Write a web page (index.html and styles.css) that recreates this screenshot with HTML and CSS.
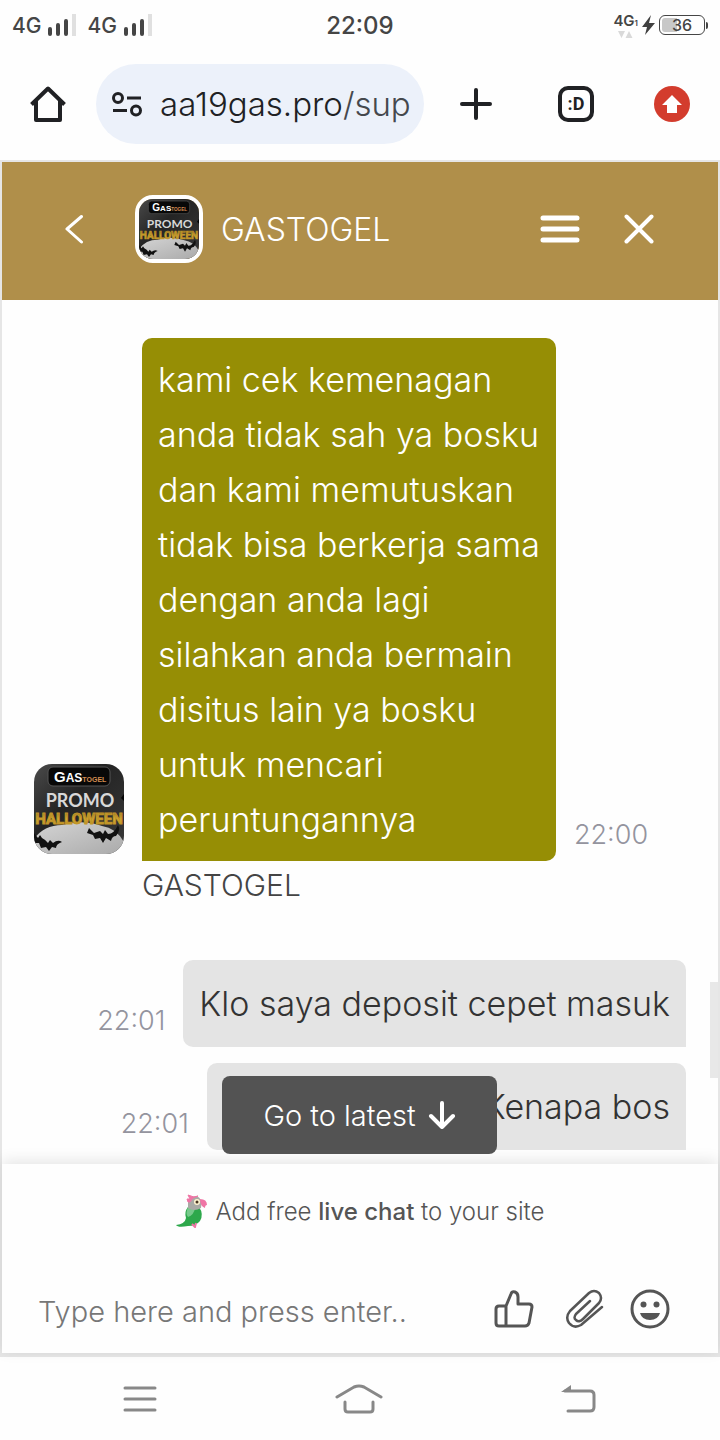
FILE: index.html
```html
<!DOCTYPE html>
<html lang="id">
<head>
<meta charset="utf-8">
<meta name="viewport" content="width=device-width, initial-scale=1">
<title>GASTOGEL live chat</title>
<link rel="stylesheet" href="styles.css">
</head>
<body>
<svg class="defs" aria-hidden="true">
  <defs>
    <linearGradient id="night" x1="0" y1="0" x2="1" y2="1"><stop offset="0" stop-color="#4a4a4a"/><stop offset=".4" stop-color="#242424"/><stop offset="1" stop-color="#393939"/></linearGradient>
    <linearGradient id="gold" x1="0" y1="0" x2="0" y2="1"><stop offset="0" stop-color="#76601a"/><stop offset=".5" stop-color="#d9ae35"/><stop offset="1" stop-color="#ad8523"/></linearGradient>
    <linearGradient id="moon" x1="0" y1="0" x2="1" y2="1"><stop offset="0" stop-color="#d4d4d4"/><stop offset="1" stop-color="#aaa"/></linearGradient>
  </defs>
  <symbol id="promo" viewBox="0 0 90 90">
    <rect width="90" height="90" fill="url(#night)"/>
    <path d="M0 75Q10 61 28 61Q48 55 68 62Q82 64 90 78V90H0Z" fill="url(#moon)"/>
    <rect x="14" y="3" width="62" height="19" rx="5" fill="#080808" stroke="#555"/>
    <text x="20" y="18" class="logo-gas">G<tspan class="logo-as">AS</tspan><tspan class="logo-togel">TOGEL</tspan></text>
    <text x="46" y="43" class="logo-promo">PROMO</text>
    <text x="45" y="60" class="logo-event">HALLOWEEN</text>
    <path d="M0 69L4 74L6 71L8 74Q12 76 14 79L16 76L19 79Q24 75 28 78Q22 80 22 84L18 83L15 87L12 83L7 84L5 79L0 79Z" fill="#111"/>
    <path d="M55 64L60 69L66 67L69 70L71 66L74 70Q80 70 84 61Q87 66 82 72Q78 72 77 77L72 74L69 79L66 74L61 75L59 71L53 69Z" fill="#111"/>
    <path d="M90 30L87 34L90 37Z" fill="#050505"/>
  </symbol>
</svg>

<header class="status">
  <div class="networks">
    <span>4G</span>
    <svg width="28" height="22" viewBox="0 0 28 22"><path d="M2 15v5M10 11v9M18 7v13" stroke="#454545" stroke-width="4" stroke-linecap="round"/><path d="M26 0v22" stroke="#e0e0e0" stroke-width="4"/></svg>
    <span class="second">4G</span>
    <svg width="28" height="22" viewBox="0 0 28 22"><path d="M2 15v5M10 11v9M18 7v13" stroke="#454545" stroke-width="4" stroke-linecap="round"/><path d="M26 0v22" stroke="#e0e0e0" stroke-width="4"/></svg>
  </div>
  <time class="clock">22:09</time>
  <div class="power">
    <div class="data"><span>4G<small>1</small></span><svg width="15" height="7" viewBox="0 0 15 7"><path d="M0 0h7L3.500 7ZM7.500 7h7L11 0Z" fill="#d9d9d9"/></svg></div>
    <svg width="13" height="20" viewBox="0 0 13 20"><path d="M9 0L0 12H5L3 20L13 8H7Z" fill="#404040"/></svg>
    <div class="battery">36</div>
  </div>
</header>

<nav class="browser">
  <button class="plain" aria-label="Home"><svg width="36" height="36" viewBox="0 0 36 36"><path d="M1.500 18.500L18 2.500L34.500 18.500M6 15V34H30V15" fill="none" stroke="#202124" stroke-width="4" stroke-linejoin="round"/></svg></button>
  <button class="address">
    <svg width="30" height="26" viewBox="0 0 30 26" fill="none" stroke="#202124"><circle cx="6" cy="7" r="4.500" stroke-width="3"/><circle cx="24" cy="19.500" r="4.500" stroke-width="3"/><path d="M15 7H29M1 19.500H15" stroke-width="3"/></svg>
    <span>aa19gas.pro<i>/sup</i></span>
  </button>
  <button class="plain plus" aria-label="New tab"><svg width="32" height="32" viewBox="0 0 32 32"><path d="M16 2V30M2 16H30" stroke="#202124" stroke-width="4" stroke-linecap="round"/></svg></button>
  <button class="tabs" aria-label="Open tabs">:D</button>
  <button class="plain" aria-label="Update browser"><svg width="36" height="36" viewBox="0 0 36 36"><circle cx="18" cy="18" r="18" fill="#d33c2d"/><path d="M18 9L28 19H23V27H13V19H8Z" fill="#fff"/></svg></button>
</nav>

<main class="chat">
  <header class="chat-head">
    <button class="plain back" aria-label="Back"><svg width="20" height="30" viewBox="0 0 20 30"><path d="M17.500 2.500L3 15L17.500 28" fill="none" stroke="#fff" stroke-width="3" stroke-linecap="round" stroke-linejoin="round"/></svg></button>
    <svg class="face small" role="img" aria-label="GASTOGEL"><use href="#promo"/></svg>
    <h1>GASTOGEL</h1>
    <button class="plain" aria-label="Menu"><svg width="40" height="28" viewBox="0 0 40 28"><path d="M3 3H37M3 14H37M3 25H37" stroke="#fff" stroke-width="5" stroke-linecap="round"/></svg></button>
    <button class="plain close" aria-label="Close"><svg width="30" height="30" viewBox="0 0 30 30"><path d="M2.500 2.500L27.500 27.500M27.500 2.500L2.500 27.500" stroke="#fff" stroke-width="4" stroke-linecap="round"/></svg></button>
  </header>

  <section class="messages">
    <article class="row agent">
      <svg class="face" role="img" aria-label="GASTOGEL"><use href="#promo"/></svg>
      <p class="bubble">kami cek kemenagan<br>anda tidak sah ya bosku<br>dan kami memutuskan<br>tidak bisa berkerja sama<br>dengan anda lagi<br>silahkan anda bermain<br>disitus lain ya bosku<br>untuk mencari<br>peruntungannya</p>
      <time>22:00</time>
      <span class="sender">GASTOGEL</span>
    </article>
    <article class="row visitor">
      <time>22:01</time>
      <p class="bubble">Klo saya deposit cepet masuk</p>
    </article>
    <article class="row visitor">
      <time>22:01</time>
      <p class="bubble long">Kenapa bos</p>
    </article>
    <button class="latest">Go to latest <svg width="28" height="28" viewBox="0 0 28 28"><path d="M14 2V25M3 15L14 26L25 15" fill="none" stroke="#fff" stroke-width="4" stroke-linecap="round" stroke-linejoin="round"/></svg></button>
    <span class="thumb"></span>
  </section>

  <footer class="compose">
    <a class="promo-link" href="#">
      <svg width="32" height="34" viewBox="0 0 32 34"><path d="M12 13Q8 18 10 24Q9 30 0 31Q2 34 12 32Q20 32 24 27Q28 20 23 13Z" fill="#2da84b"/><path d="M12 13Q9 20 12 23Q18 21 19 14Z" fill="#77c98b"/><path d="M12 8Q14 2 21 2Q27 5 25 14Q18 18 12 14Z" fill="#a9aaa5"/><path d="M12 8L11 5L14 5L12 1L18 3L22 2Q16 3 14 8Z" fill="#ef75a5" stroke="#ef75a5"/><path d="M24 5Q31 5 31 11Q29 11 29 14Q24 12 24 5Z" fill="#ef75a5"/><circle cx="21" cy="8" r="3" fill="#fff5d0"/><circle cx="21" cy="8" r="1.500" fill="#443322"/><path d="M16 30l3 3 1-4" stroke="#ef75a5" stroke-width="2" fill="none"/></svg>
      <span>Add free <b>live chat</b> to your site</span>
    </a>
    <form class="entry">
      <input type="text" aria-label="Message" placeholder="Type here and press enter..">
      <button type="button" class="plain" aria-label="Like"><svg width="40" height="40" viewBox="0 0 40 40" fill="none" stroke="#555" stroke-width="3" stroke-linejoin="round"><path d="M12 17L17 5Q18 2 21 3Q24 4 24 8V15H35Q38 15 38 18L35 34Q34 37 31 37H5Q2 37 2 34V20Q2 17 5 17H12V37"/></svg></button>
      <button type="button" class="plain clip" aria-label="Attach file"><svg width="40" height="40" viewBox="0 0 40 40" fill="none" stroke="#555" stroke-width="2.500" stroke-linecap="round" stroke-linejoin="round"><path d="M25 12L11 25Q8 29 11 31Q14 34 18 30L34 14Q38 9 34 4Q29 0 24 4L5 22Q0 28 4 34Q9 40 16 36L37 18"/></svg></button>
      <button type="button" class="plain" aria-label="Emoji"><svg width="40" height="40" viewBox="0 0 40 40"><circle cx="20" cy="20" r="18" fill="none" stroke="#555" stroke-width="3"/><circle cx="13.500" cy="15.500" r="3" fill="#555"/><circle cx="26.500" cy="15.500" r="3" fill="#555"/><path d="M10 24H30Q28 31 20 31Q12 31 10 24Z" fill="#555"/></svg></button>
    </form>
  </footer>
</main>

<nav class="system">
  <button class="plain" aria-label="Recent apps"><svg width="34" height="26" viewBox="0 0 34 26"><path d="M2 2H32M2 13H32M2 24H32" stroke="#888" stroke-width="3" stroke-linecap="round"/></svg></button>
  <button class="plain" aria-label="Home screen"><svg width="48" height="30" viewBox="0 0 48 30" fill="none" stroke="#888" stroke-width="3" stroke-linecap="round"><path d="M2 13L19 3Q24 1 29 3L46 13M10 18V25Q10 28 13 28H35Q38 28 38 25V18"/></svg></button>
  <button class="plain" aria-label="Go back"><svg width="36" height="28" viewBox="0 0 36 28"><path d="M7 26H29Q33 26 33 22V10Q33 6 29 6H4" fill="none" stroke="#888" stroke-width="3" stroke-linecap="round"/><path d="M0 7L10 0V7Z" fill="#888"/></svg></button>
</nav>
</body>
</html>
```
FILE: styles.css
```css
* { box-sizing: border-box; }
body {
  margin: 0;
  min-height: 100vh;
  display: flex;
  flex-direction: column;
  background: #fefefe;
  color: #333;
  font-family: Inter, "Liberation Sans", sans-serif;
  font-weight: 300;
}
svg { display: block; flex: none; }
.defs { position: absolute; width: 0; height: 0; }
button { font: inherit; color: inherit; cursor: pointer; }
.plain { padding: 0; border: 0; background: none; flex: none; }

/* Phone status bar */
.status {
  display: grid;
  grid-template-columns: 1fr auto 1fr;
  align-items: center;
  height: 50px;
  padding: 0 12px;
  color: #454545;
}
.networks { display: flex; align-items: center; gap: 7px; font-size: 21px; font-weight: 500; }
.second { margin-left: 4px; }
.clock { font-size: 24px; font-weight: 500; }
.power { display: flex; align-items: center; justify-content: flex-end; gap: 4px; }
.data { display: flex; flex-direction: column; align-items: center; font-size: 15px; line-height: 16px; font-weight: 600; }
.data small { font-size: 8px; }
.battery {
  position: relative;
  width: 46px;
  height: 20px;
  border: 1px solid #454545;
  border-radius: 6px;
  margin-right: 3px;
  background: linear-gradient(90deg, #c8c8c8 38%, transparent 38%) content-box;
  padding: 2px;
  font-size: 16px;
  line-height: 15px;
  font-weight: 500;
  text-align: center;
}
.battery::after { content: ""; position: absolute; top: 6px; right: -4px; width: 2px; height: 7px; border-radius: 0 2px 2px 0; background: #454545; }

/* Browser toolbar */
.browser { display: flex; align-items: center; height: 110px; padding: 0 30px 2px; color: #202124; }
.address {
  flex: 1;
  min-width: 0;
  display: flex;
  align-items: center;
  gap: 18px;
  height: 80px;
  margin: 0 36px 0 30px;
  padding: 0 0 0 16px;
  border: 0;
  border-radius: 40px;
  background: #ecf1fa;
  font-size: 33px;
  white-space: nowrap;
}
.address i { font-style: normal; color: #45484d; }
.tabs {
  flex: none;
  width: 36px;
  height: 36px;
  margin: 0 60px 0 66px;
  padding: 0;
  border: 4px solid #202124;
  border-radius: 10px;
  background: none;
  font-family: Roboto, sans-serif;
  font-size: 18px;
  line-height: 26px;
  font-weight: 700;
}

/* Chat window */
.chat {
  flex: 1;
  display: flex;
  flex-direction: column;
  border: 2px solid #e6e6e6;
  border-bottom-width: 4px;
}
.chat-head { display: flex; align-items: center; height: 138px; padding: 0 64px 4px 62px; background: #b08f4a; color: #fff; }
.chat-head h1 { flex: 1; margin: 0 0 0 18px; font-size: 32px; font-weight: 300; }
.close { margin-left: 44px; }
.face { width: 90px; height: 90px; border-radius: 18px; }
.small { width: 68px; height: 68px; margin-left: 51px; border: 4px solid #fff; }
.logo-gas { font: 700 15px "Liberation Sans", sans-serif; fill: #fff; }
.logo-as { font-size: 12px; }
.logo-togel { font-size: 7px; fill: #d58c50; }
.logo-promo { font: 700 18px Lato, sans-serif; fill: #d8d8d8; text-anchor: middle; }
.logo-event { font: 700 15px Roboto, sans-serif; fill: url(#gold); stroke: #c09528; stroke-width: 1px; text-anchor: middle; }

.messages { position: relative; flex: 1; display: flex; flex-direction: column; padding: 38px 32px 14px; }
.row time { color: #94949e; font-size: 27px; }
.bubble { margin: 0; padding: 16px; font-size: 34px; line-height: 55px; white-space: nowrap; }
.agent { display: grid; grid-template-columns: 90px auto 1fr; column-gap: 18px; align-items: end; margin-bottom: 57px; }
.agent .face { margin-bottom: 7px; }
.agent .bubble { padding: 14px 16px; border-radius: 10px 10px 10px 0; background: #968e05; color: #fff; }
.agent time { padding-bottom: 10px; }
.sender { grid-column: 2; margin-top: 6px; font-size: 30px; color: #444; }
.visitor { display: flex; justify-content: flex-end; align-items: flex-end; gap: 18px; }
.visitor + .visitor { margin-top: 16px; }
.visitor time { padding-bottom: 10px; }
.visitor .bubble { border-radius: 10px 10px 0 10px; background: #e4e4e4; }
.visitor .long { width: 73.5%; text-align: right; }
.latest {
  position: absolute;
  left: 220px;
  bottom: 10px;
  display: flex;
  align-items: center;
  justify-content: center;
  gap: 12px;
  width: 275px;
  height: 78px;
  padding: 0;
  border: 0;
  border-radius: 8px;
  background: #535353;
  color: #fff;
  font-size: 29px;
  z-index: 1;
}
.thumb { position: absolute; right: 0; bottom: 86px; width: 8px; height: 96px; background: #e8e8e8; }

.compose { padding: 30px 36px 24px; box-shadow: 0 -3px 14px rgba(0, 0, 0, .1); }
.promo-link { display: flex; align-items: center; justify-content: center; gap: 8px; color: #555; font-size: 24px; text-decoration: none; }
.promo-link b { font-weight: 500; }
.entry { display: flex; align-items: center; margin-top: 60px; padding-right: 12px; }
.entry input { flex: 1; min-width: 0; padding: 6px 0 0; border: 0; background: none; font: inherit; font-size: 29px; color: #333; }
.entry input::placeholder { color: #777; opacity: 1; }
.clip { margin: 0 25px 0 31px; }

/* System navigation */
.system { display: flex; justify-content: space-between; align-items: center; height: 83px; padding: 0 123px; }
```
